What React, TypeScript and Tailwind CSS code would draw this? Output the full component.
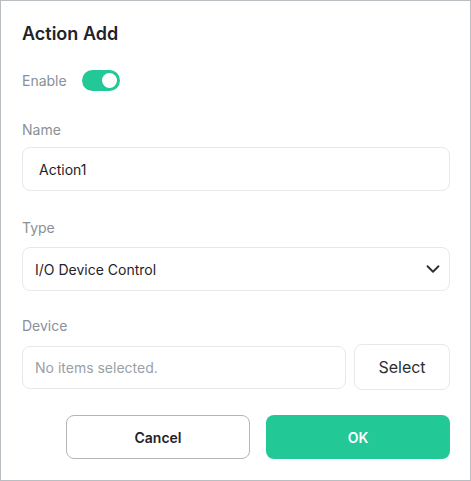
import { ChevronDown } from 'lucide-react';

// =============================================================================
// Component
// =============================================================================

export default function App() {
  return (
    <div
      className="w-[471px] h-[481px] box-border border border-[#b9bec3] bg-white pl-[21px] pr-[20px] pt-[21px] flex flex-col text-[#1f2328]"
      style={{ fontFamily: 'Inter, "Noto Sans", sans-serif' }}
    >
      {/* Title */}
      <h1 className="h-6 leading-6 text-[18px] font-semibold text-[#1f2328]">Action Add</h1>

      {/* Enable toggle */}
      <div className="mt-[23px] h-[22px] flex items-center gap-[15px]">
        <span className="text-[14px] text-[#8a9098]">Enable</span>
        <button
          type="button"
          className="relative w-[38px] h-[21px] rounded-full bg-[#22c896]"
          aria-pressed="true"
        >
          <span className="absolute right-[3px] top-[3px] w-[15px] h-[15px] rounded-full bg-white" />
        </button>
      </div>

      {/* Name */}
      <label className="mt-[29px] h-5 leading-5 text-[14px] text-[#8a9098]">Name</label>
      <div className="mt-[7px] h-[44px] rounded-lg border border-[#e6e8eb] flex items-center pl-4 text-[14px] text-[#1f2328]">
        Action1
      </div>

      {/* Type */}
      <label className="mt-[27px] h-5 leading-5 text-[14px] text-[#8a9098]">Type</label>
      <div className="mt-[9px] h-[44px] rounded-lg border border-[#e6e8eb] flex items-center justify-between pl-3 pr-[5px] text-[14px] text-[#1f2328]">
        <span>I/O Device Control</span>
        <ChevronDown size={22} strokeWidth={2} className="text-[#2b2f33]" />
      </div>

      {/* Device */}
      <label className="mt-[25px] h-5 leading-5 text-[14px] text-[#8a9098]">Device</label>
      <div className="mt-2 h-[46px] flex items-center gap-2">
        <div className="flex-1 h-[43px] rounded-lg border border-[#e6e8eb] flex items-center pl-3 text-[14px] text-[#9aa0a6]">
          No items selected.
        </div>
        <button
          type="button"
          className="w-[96px] h-[46px] rounded-lg border border-[#e6e8eb] bg-white text-[16px] text-[#2b2f33]"
        >
          Select
        </button>
      </div>

      {/* Actions */}
      <div className="mt-[25px] flex justify-end gap-4">
        <button
          type="button"
          className="w-[184px] h-[44px] rounded-lg border border-[#b1b6bb] bg-white text-[14px] font-semibold text-[#1f2328]"
        >
          Cancel
        </button>
        <button
          type="button"
          className="w-[184px] h-[44px] rounded-lg bg-[#22c896] text-[14px] font-semibold text-white"
        >
          OK
        </button>
      </div>
    </div>
  );
}
